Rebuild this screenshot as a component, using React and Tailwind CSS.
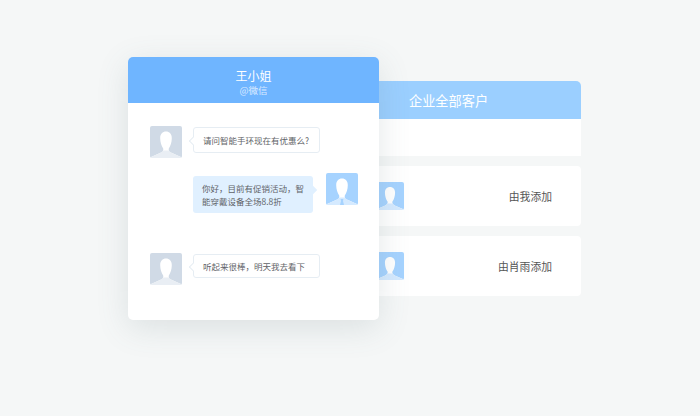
function Avatar({ bg, head, shoulder, tie, size = 32 }) {
  return (
    <svg width={size} height={size} viewBox="0 0 32 32" className="shrink-0 rounded-[2px]">
      <rect width="32" height="32" fill={bg} />
      <path d="M0 31.5 L10 27 C13 25.8 13.6 24.6 13.2 22.4 C11.6 20.4 10.2 16 10.2 12.2 C10.2 8 12.6 5.6 16 5.6 C19.4 5.6 21.8 8 21.8 12.2 C21.8 16 20.4 20.4 18.8 22.4 C18.4 24.6 19 25.8 22 27 L32 31.5 L32 32 L0 32 Z" fill={head} />
      <path d="M0 31.5 L10 27 C12 26.2 13 25.4 13.4 24.6 L18.6 24.6 C19 25.4 20 26.2 22 27 L32 31.5 L32 32 L0 32 Z" fill={shoulder} />
      {tie && <path d="M14.6 26 L17.4 26 L17 28 L18 32 L14 32 L15 28 Z" fill={tie} />}
    </svg>
  );
}

function Bubble({ className, tail, children }) {
  return (
    <div className={`relative rounded-[3px] text-[8.5px] text-[#5f6368] ${className}`}>
      {tail}
      {children}
    </div>
  );
}

function Row({ label }) {
  return (
    <div className="flex h-[60px] items-center justify-between rounded-r-[4px] bg-white pl-[36px] pr-[29px]">
      <Avatar size={28} bg="#a6d3ff" head="#ffffff" shoulder="#d5eaff" />
      <span className="text-[10.8px] text-[#555]">{label}</span>
    </div>
  );
}

export default function App() {
  return (
    <div className="h-[416px] w-[700px] overflow-hidden bg-[#f5f7f7] pl-[128px] pt-[57px] font-['Noto_Sans_CJK_SC','Noto_Sans',sans-serif]">
      <div className="flex items-start">
        {/* chat card */}
        <div className="relative z-10 h-[263px] w-[251px] shrink-0 overflow-hidden rounded-[5px] bg-white shadow-[0_8px_32px_rgba(90,110,120,0.16)]">
          <div className="flex h-[46px] flex-col items-center justify-center bg-[#6fb5ff] pt-[3px] text-white">
            <div className="text-[12px] leading-[17px]">王小姐</div>
            <div className="text-[9.5px] leading-[13px] text-white/75">@微信</div>
          </div>

          <div className="flex flex-col pl-[22px] pr-[21px] pt-[23px]">
            <div className="flex items-start gap-[11px]">
              <Avatar bg="#d0dae6" head="#ffffff" shoulder="#e9eef4" />
              <Bubble
                className="mt-px flex h-[26px] w-[127px] items-center whitespace-nowrap border border-[#e6edf3] bg-white pl-[9px]"
                tail={<span className="absolute -left-[4px] top-[10px] h-[6px] w-[6px] rotate-45 border-b border-l border-[#e6edf3] bg-white" />}
              >
                请问智能手环现在有优惠么?
              </Bubble>
            </div>

            <div className="mt-[15px] flex items-start justify-end gap-[13px]">
              <Bubble
                className="mt-[3px] w-[120px] bg-[#e0f0ff] px-[9px] py-[6px] leading-[12.5px]"
                tail={<span className="absolute -right-[3px] top-[11px] h-[6px] w-[6px] rotate-45 bg-[#e0f0ff]" />}
              >
                你好，目前有促销活动，智能穿戴设备全场8.8折
              </Bubble>
              <Avatar bg="#a6d3ff" head="#ffffff" shoulder="#d5eaff" tie="#a6d3ff" />
            </div>

            <div className="mt-[40px] flex items-start gap-[11px]">
              <Avatar bg="#d0dae6" head="#ffffff" shoulder="#e9eef4" />
              <Bubble
                className="mt-px flex h-[24px] w-[127px] items-center whitespace-nowrap border border-[#e6edf3] bg-white pl-[9px]"
                tail={<span className="absolute -left-[4px] top-[9px] h-[6px] w-[6px] rotate-45 border-b border-l border-[#e6edf3] bg-white" />}
              >
                听起来很棒，明天我去看下
              </Bubble>
            </div>
          </div>
        </div>

        {/* customer list behind the card */}
        <div className="-ml-[39px] mt-[24px] flex w-[241px] shrink-0 flex-col">
          <div className="flex h-[38px] items-center rounded-tr-[5px] bg-[#9bcfff] pl-[69px] pt-px text-[13.2px] text-white">
            企业全部客户
          </div>
          <div className="h-[37px] bg-white" />
          <div className="mt-[10px] flex flex-col gap-[10px]">
            <Row label="由我添加" />
            <Row label="由肖雨添加" />
          </div>
        </div>
      </div>
    </div>
  );
}
